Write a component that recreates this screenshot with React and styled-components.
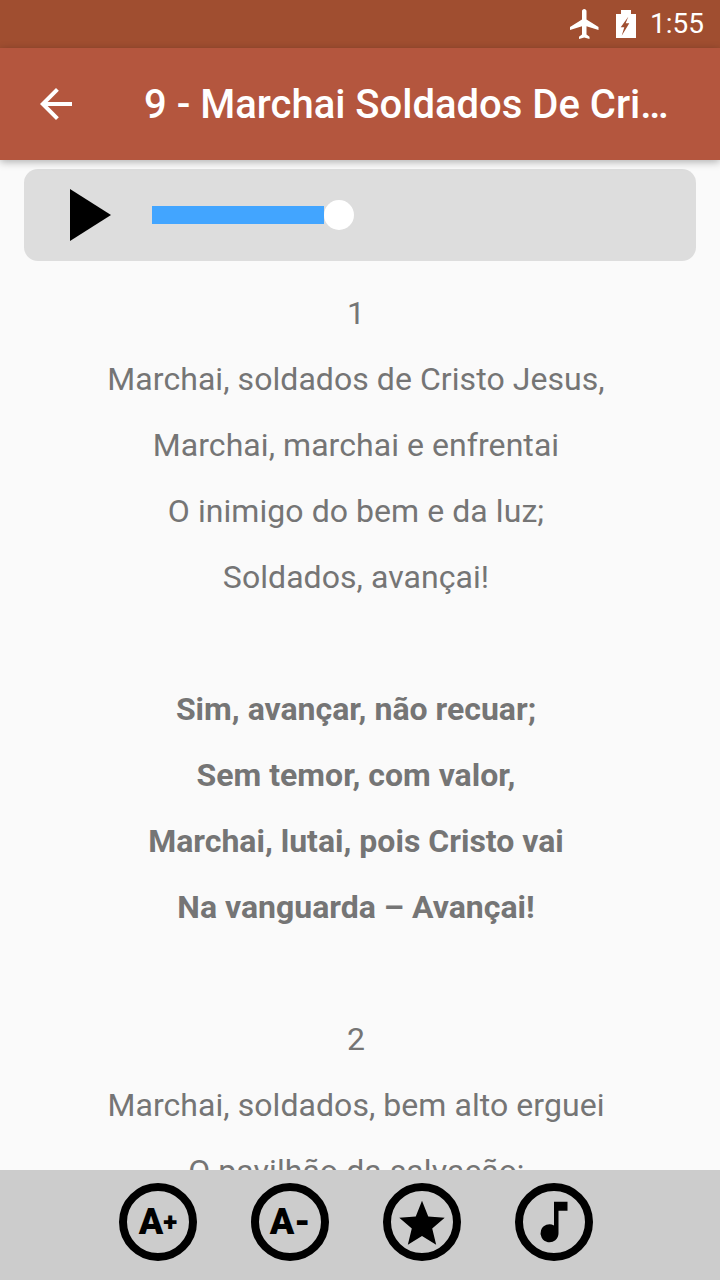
import React from "react";
import styled, { createGlobalStyle } from "styled-components";

const GlobalStyle = createGlobalStyle`
  html, body {
    margin: 0;
    padding: 0;
    background: #fafafa;
  }
  * {
    box-sizing: border-box;
  }
`;

const Screen = styled.div`
  display: flex;
  flex-direction: column;
  width: 720px;
  height: 1280px;
  overflow: hidden;
  font-family: Roboto, "Liberation Sans", sans-serif;
  background: #fafafa;
`;

const StatusBar = styled.div`
  display: flex;
  align-items: center;
  justify-content: flex-end;
  flex: 0 0 48px;
  padding-right: 16px;
  background: #a04e30;
  color: #fff;
`;

const PlaneIcon = styled.svg`
  width: 36px;
  height: 36px;
  margin-right: 13px;
  fill: #fff;
`;

const BatteryIcon = styled.svg`
  width: 20px;
  height: 28px;
  margin-right: 14px;
  fill: #fff;
`;

const Clock = styled.span`
  font-size: 28px;
  line-height: 48px;
`;

const AppBar = styled.header`
  position: relative;
  z-index: 2;
  display: flex;
  align-items: center;
  flex: 0 0 112px;
  padding: 0 48px 0 32px;
  background: #b4563e;
  box-shadow: 0 2px 8px rgba(0, 0, 0, 0.3);
`;

const BackIcon = styled.svg`
  flex: 0 0 48px;
  height: 48px;
  fill: #fff;
`;

const Title = styled.h1`
  flex: 1;
  min-width: 0;
  margin: 0 0 0 64px;
  overflow: hidden;
  white-space: nowrap;
  text-overflow: ellipsis;
  font-size: 40px;
  font-weight: 500;
  color: #fff;
`;

const Player = styled.div`
  display: flex;
  align-items: center;
  flex: 0 0 92px;
  margin: 9px 24px 0;
  padding-left: 46px;
  border-radius: 14px;
  background: #dddddd;
`;

const PlayTriangle = styled.div`
  width: 0;
  height: 0;
  margin-right: 41px;
  border-style: solid;
  border-width: 26px 0 26px 41px;
  border-color: transparent transparent transparent #000;
`;

const Track = styled.div`
  position: relative;
  width: 172px;
  height: 18px;
  background: #42a5ff;
`;

const Thumb = styled.div`
  position: absolute;
  top: -6px;
  left: 172px;
  width: 30px;
  height: 30px;
  border-radius: 50%;
  background: #fff;
`;

const Lyrics = styled.main`
  flex: 1;
  min-height: 0;
  overflow: hidden;
  padding-top: 19px;
`;

const Line = styled.p`
  width: 712px;
  height: 66px;
  margin: 0;
  text-align: center;
  font-size: 32px;
  line-height: 66px;
  letter-spacing: ${(p) => (p.$bold ? 0 : 0.06)}px;
  font-weight: ${(p) => (p.$bold ? 700 : 400)};
  color: #757575;
`;

const BottomBar = styled.footer`
  display: flex;
  align-items: center;
  justify-content: center;
  gap: 54px;
  flex: 0 0 110px;
  padding: 0 8px 6px 0;
  background: #cccccc;
`;

const RoundButton = styled.button`
  display: flex;
  align-items: center;
  justify-content: center;
  width: 78px;
  height: 78px;
  padding: 0;
  border: 8px solid #000;
  border-radius: 50%;
  background: transparent;
  color: #000;
`;

const FontLabel = styled.span`
  display: flex;
  align-items: center;
  font-family: Roboto, "Liberation Sans", sans-serif;
  font-size: 36px;
  font-weight: 900;
  line-height: 1;
`;

const FontSign = styled.span`
  font-size: ${(p) => p.$size}px;
  font-weight: 900;
`;

const ButtonIcon = styled.svg`
  width: ${(p) => p.$size}px;
  height: ${(p) => p.$size}px;
  flex: none;
  fill: #000;
`;

const verses = [
  { text: "1" },
  { text: "Marchai, soldados de Cristo Jesus," },
  { text: "Marchai, marchai e enfrentai" },
  { text: "O inimigo do bem e da luz;" },
  { text: "Soldados, avançai!" },
  { text: "\u00a0" },
  { text: "Sim, avançar, não recuar;", bold: true },
  { text: "Sem temor, com valor,", bold: true },
  { text: "Marchai, lutai, pois Cristo vai", bold: true },
  { text: "Na vanguarda – Avançai!", bold: true },
  { text: "\u00a0" },
  { text: "2" },
  { text: "Marchai, soldados, bem alto erguei" },
  { text: "O pavilhão da salvação;" },
];

export default function App() {
  return (
    <Screen>
      <GlobalStyle />
      <StatusBar>
        <PlaneIcon viewBox="0 0 24 24">
          <path d="M21 16v-2l-8-5V3.5c0-.83-.67-1.5-1.5-1.5S10 2.67 10 3.5V9l-8 5v2l8-2.5V19l-2 1.5V22l3.5-1 3.5 1v-1.5L13 19v-5.5l8 2.5z" />
        </PlaneIcon>
        <BatteryIcon viewBox="0 0 20 28">
          <path
            fillRule="evenodd"
            d="M5 0h10v4h5v24H0V4h5zM12.3 6.7L4.7 17.3h3.6L5.7 25.7l7.6-12.4H9.7z"
          />
        </BatteryIcon>
        <Clock>1:55</Clock>
      </StatusBar>
      <AppBar>
        <BackIcon viewBox="0 0 24 24">
          <path d="M20 11H7.83l5.59-5.59L12 4l-8 8 8 8 1.41-1.41L7.83 13H20v-2z" />
        </BackIcon>
        <Title>9 - Marchai Soldados De Cristo Jesus</Title>
      </AppBar>
      <Player>
        <PlayTriangle />
        <Track>
          <Thumb />
        </Track>
      </Player>
      <Lyrics>
        {verses.map((line, i) => (
          <Line key={i} $bold={line.bold}>
            {line.text}
          </Line>
        ))}
      </Lyrics>
      <BottomBar>
        <RoundButton>
          <FontLabel>
            A<FontSign $size={26}>+</FontSign>
          </FontLabel>
        </RoundButton>
        <RoundButton>
          <FontLabel>
            A<FontSign $size={36}>-</FontSign>
          </FontLabel>
        </RoundButton>
        <RoundButton>
          <ButtonIcon viewBox="0 0 24 24" $size={50}>
            <path d="M12 1.8l3 7.5 7.9.6-6 5.2 1.9 7.8L12 18.7l-6.8 4.2 1.9-7.8-6-5.2 7.9-.6z" />
          </ButtonIcon>
        </RoundButton>
        <RoundButton>
          <ButtonIcon viewBox="0 0 24 24" $size={54}>
            <path d="M12 3v10.55A4 4 0 1 0 14 17V7h4V3h-6z" />
          </ButtonIcon>
        </RoundButton>
      </BottomBar>
    </Screen>
  );
}
